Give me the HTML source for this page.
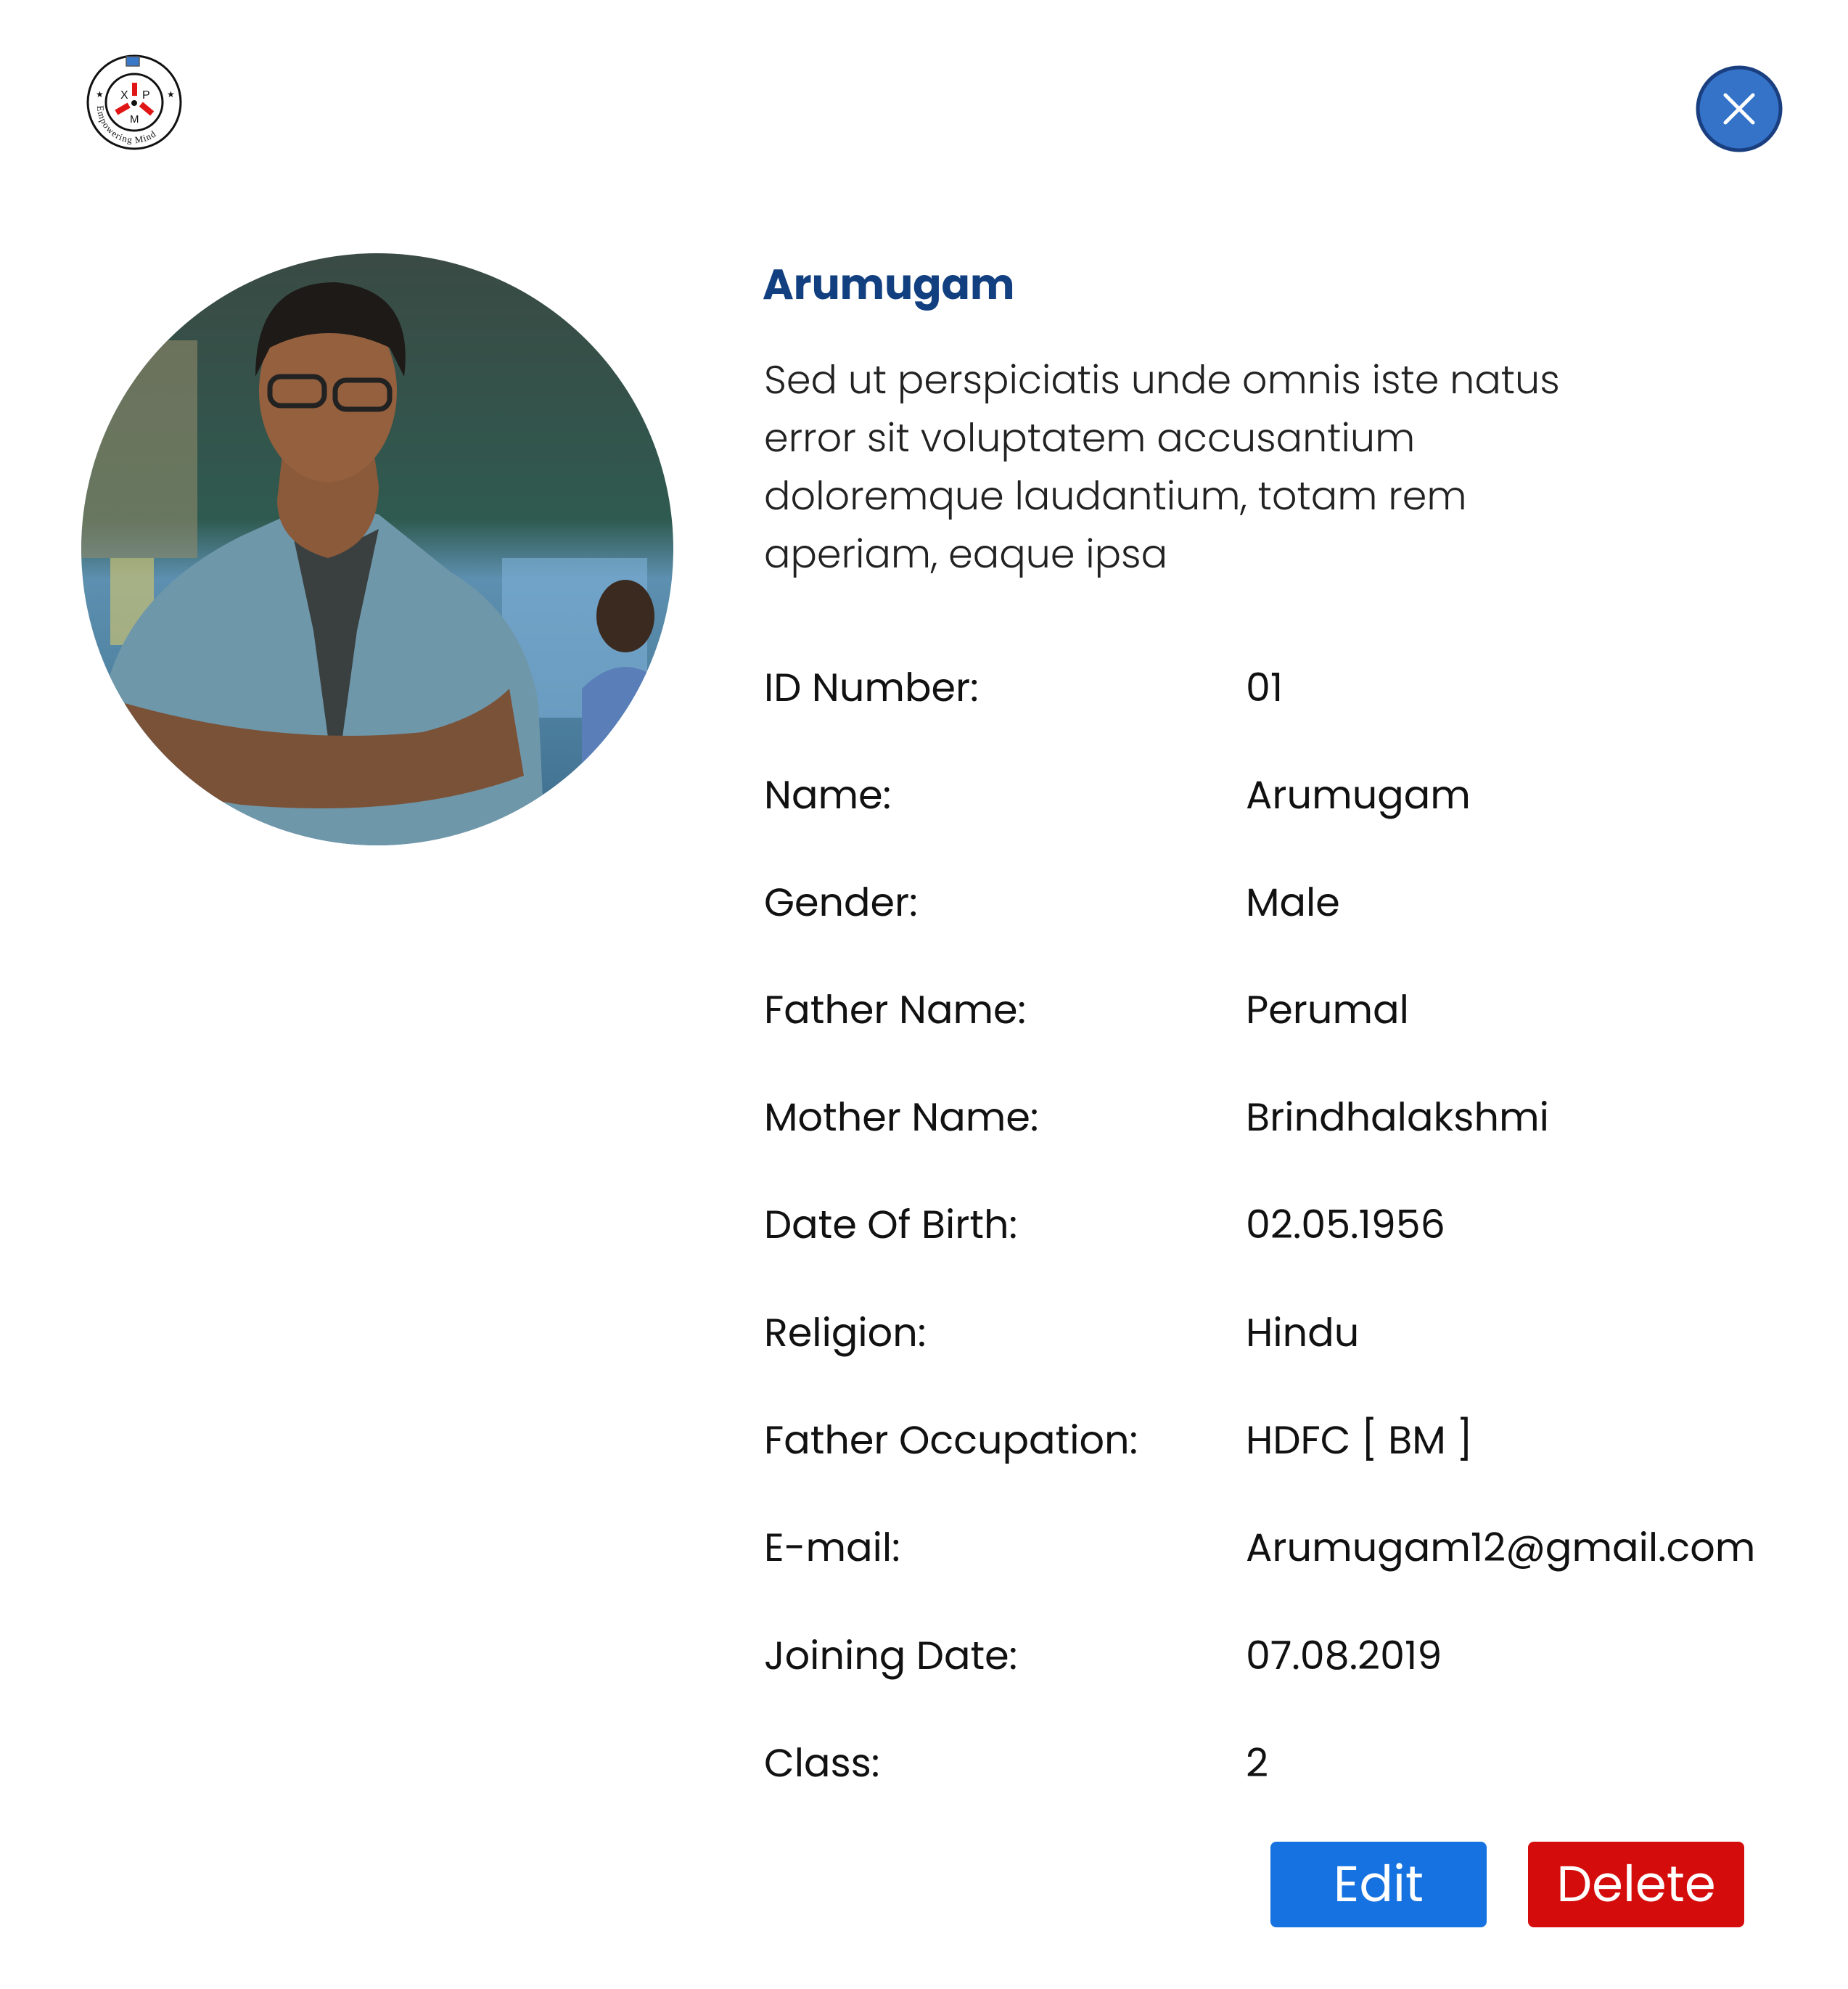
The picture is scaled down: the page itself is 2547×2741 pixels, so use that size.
<!DOCTYPE html>
<html><head><meta charset="utf-8"><style>
html,body{margin:0;padding:0;background:#fff;}
body{width:2547px;height:2741px;position:relative;overflow:hidden;font-family:"Poppins","Liberation Sans",sans-serif;color:#111;}
.abs{position:absolute;}
.lbl,.val{position:absolute;font-size:54px;line-height:60px;white-space:nowrap;}
.lbl{left:1053px;}
.val{left:1717px;}
.btn{position:absolute;top:2538px;width:298px;height:118px;border-radius:8px;color:#fff;font-size:69px;line-height:118px;text-align:center;}
</style></head><body>

<svg class="abs" style="left:112px;top:68px" width="146" height="146" viewBox="0 0 146 146">
<circle cx="73" cy="73" r="64" fill="#fff" stroke="#111" stroke-width="3"/>
<circle cx="73" cy="73" r="39" fill="#fff" stroke="#111" stroke-width="3"/>
<rect x="62" y="10" width="18" height="13" fill="#3a78c8" stroke="#555" stroke-width="1.5"/>
<rect x="70" y="46" width="7" height="18" fill="#e01515"/>
<rect x="47" y="78" width="20" height="8" fill="#e01515" transform="rotate(-30 57 82)"/>
<rect x="80" y="78" width="20" height="8" fill="#e01515" transform="rotate(40 90 82)"/>
<circle cx="73" cy="74" r="4" fill="#111"/>
<text x="54" y="68" font-size="16" font-family="Liberation Sans" fill="#111">X</text>
<text x="84" y="68" font-size="16" font-family="Liberation Sans" fill="#111">P</text>
<text x="67" y="101" font-size="15" font-family="Liberation Sans" fill="#111">M</text>
<text x="20" y="66" font-size="12" fill="#111">★</text>
<text x="118" y="66" font-size="12" fill="#111">★</text>
<path id="arc" d="M22 78 A51 51 0 0 0 124 78" fill="none"/>
<text font-size="13" font-family="Liberation Serif" fill="#111" letter-spacing="1"><textPath href="#arc">Empowering Mind</textPath></text>
</svg>

<svg class="abs" style="left:2336px;top:89px" width="122" height="122" viewBox="0 0 122 122">
<circle cx="61" cy="61" r="57" fill="#3573c9" stroke="#1a3f80" stroke-width="5"/>
<path d="M42 42 L80 80 M80 42 L42 80" stroke="#fff" stroke-width="5" stroke-linecap="round"/>
</svg>

<svg class="abs" style="left:112px;top:349px" width="816" height="816" viewBox="0 0 816 816">
<defs>
<clipPath id="c"><circle cx="408" cy="408" r="408"/></clipPath>
<linearGradient id="bg" x1="0" y1="0" x2="0" y2="1">
<stop offset="0" stop-color="#3a4a44"/><stop offset="0.45" stop-color="#2f5a50"/><stop offset="0.55" stop-color="#5d90b0"/><stop offset="1" stop-color="#3d6d8c"/></linearGradient>
</defs>
<g clip-path="url(#c)">
<rect width="816" height="816" fill="url(#bg)"/>
<rect x="0" y="120" width="160" height="300" fill="#8f8a6a" opacity="0.6"/>
<rect x="40" y="420" width="60" height="120" fill="#d8c86a" opacity="0.6"/>
<rect x="580" y="420" width="200" height="220" fill="#7fb0d8" opacity="0.6"/>
<ellipse cx="750" cy="500" rx="40" ry="50" fill="#3a2a20"/>
<path d="M690 600 Q750 540 810 600 L816 816 L690 816Z" fill="#5a7fb8"/>
<g transform="translate(70,20)">
<path d="M-40 816 L-30 560 Q10 440 150 370 L260 320 L340 340 L440 420 Q540 480 560 600 L570 816Z" fill="#6f97aa"/>
<path d="M220 360 L280 390 L340 360 L310 500 L280 720 L250 500Z" fill="#3a4040"/>
<path d="M-10 600 Q200 660 400 640 Q480 620 520 580 L540 700 Q380 760 150 740 Q20 720 -10 680Z" fill="#7a5238"/>
<path d="M200 320 Q200 380 270 400 Q340 380 340 300 L330 230 L210 230Z" fill="#8a5a3a"/>
<ellipse cx="270" cy="170" rx="95" ry="125" fill="#94603e"/>
<path d="M170 150 Q170 20 280 20 Q390 30 375 150 L355 110 Q270 70 190 110Z" fill="#1e1a18"/>
<rect x="190" y="150" width="75" height="40" rx="15" fill="none" stroke="#222" stroke-width="7"/>
<rect x="280" y="155" width="75" height="40" rx="15" fill="none" stroke="#222" stroke-width="7"/>
</g>
</g>
</svg>

<div class="abs" style="left:1051px;top:358px;font-size:58px;font-weight:bold;color:#123f7f;line-height:70px;">Arumugam</div>
<div class="abs" style="left:1053px;top:483px;width:1300px;font-size:54px;font-weight:300;line-height:80px;color:#222;">Sed ut perspiciatis unde omnis iste natus<br>error sit voluptatem accusantium<br>doloremque laudantium, totam rem<br>aperiam, eaque ipsa</div>

<div class="lbl" style="top:917px">ID Number:</div><div class="val" style="top:917px">01</div>
<div class="lbl" style="top:1065px">Name:</div><div class="val" style="top:1065px">Arumugam</div>
<div class="lbl" style="top:1213px">Gender:</div><div class="val" style="top:1213px">Male</div>
<div class="lbl" style="top:1361px">Father Name:</div><div class="val" style="top:1361px">Perumal</div>
<div class="lbl" style="top:1509px">Mother Name:</div><div class="val" style="top:1509px">Brindhalakshmi</div>
<div class="lbl" style="top:1657px">Date Of Birth:</div><div class="val" style="top:1657px">02.05.1956</div>
<div class="lbl" style="top:1806px">Religion:</div><div class="val" style="top:1806px">Hindu</div>
<div class="lbl" style="top:1954px">Father Occupation:</div><div class="val" style="top:1954px">HDFC [ BM ]</div>
<div class="lbl" style="top:2102px">E-mail:</div><div class="val" style="top:2102px">Arumugam12@gmail.com</div>
<div class="lbl" style="top:2251px">Joining Date:</div><div class="val" style="top:2251px">07.08.2019</div>
<div class="lbl" style="top:2399px">Class:</div><div class="val" style="top:2399px">2</div>

<div class="btn" style="left:1751px;background:#1672e0;">Edit</div>
<div class="btn" style="left:2106px;background:#d50c0c;">Delete</div>
</body></html>
